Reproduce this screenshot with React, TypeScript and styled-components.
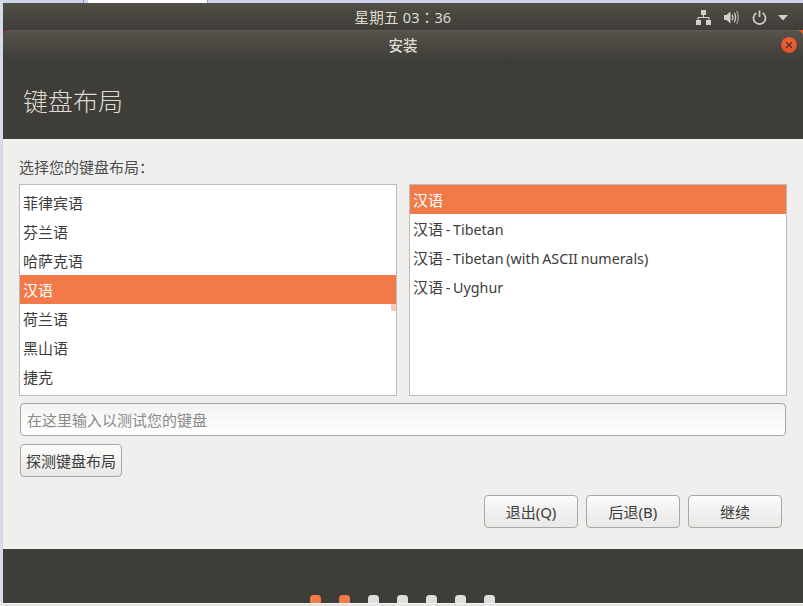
/* base */
import React from 'react';
import styled, { createGlobalStyle } from 'styled-components';

const Global = createGlobalStyle`
  html, body {
    margin: 0;
    padding: 0;
    background: #f0efed;
  }
  body {
    width: 803px;
    height: 606px;
    overflow: hidden;
    font-family: "Open Sans", "Noto Sans CJK SC", sans-serif;
  }
`;

const CJK = `"Noto Sans", "Noto Sans CJK SC", sans-serif`;

const Screen = styled.div`
  width: 803px;
  height: 606px;
  display: flex;
  flex-direction: column;
  overflow: hidden;
  background: #e4e4e2;
`;

const TabStrip = styled.div`
  height: 3px;
  flex: none;
  display: flex;
  background: #cdd5ea;
  border-left: 3px solid;
  border-image: linear-gradient(to right, #d5dbeb 34%, #7f88a3 34%) 1;
  box-sizing: border-box;
`;

const Tab = styled.div<{ $active?: boolean }>`
  margin-left: ${p => (p.$active ? '4px' : '0')};
  width: ${p => (p.$active ? '119px' : '80px')};
  background: ${p => (p.$active ? '#ffffff' : '#cdd5ea')};
  border-right: 1px solid #8f9ab8;
`;

const Desktop = styled.div`
  flex: 1;
  min-height: 0;
  display: flex;
  flex-direction: column;
  border-left: 3px solid;
  border-image: linear-gradient(to right, #d5dbeb 34%, #7f88a3 34%) 1;
  background: #3f3d38;
`;

const Panel = styled.header`
  height: 27px;
  flex: none;
  display: grid;
  grid-template-columns: 1fr auto 1fr;
  align-items: center;
  padding-right: 15px;
  background: linear-gradient(#514e47, #3f3d38);
  color: #dfdbd2;
`;

const Clock = styled.div`
  font: 14.5px/27px ${CJK};
  letter-spacing: 0.2px;
  white-space: pre;
  margin-left: 15px;
`;

const ClockColon = styled.span`
  font-family: "Noto Sans CJK TC", sans-serif;
`;

const Tray = styled.div`
  display: flex;
  justify-content: flex-end;
  align-items: center;
  gap: 13px;

  & > svg:last-child {
    margin-left: -2px;
    margin-top: 1px;
  }
`;

const Window = styled.main`
  flex: 1;
  min-height: 0;
  display: flex;
  flex-direction: column;
  position: relative;

  &::before,
  &::after {
    content: '';
    position: absolute;
    top: 0;
    width: 5px;
    height: 5px;
  }
  &::before {
    left: 0;
    background: #8b1d3c;
  }
  &::after {
    right: 0;
    background: #e9602f;
  }
`;

const TitleBar = styled.div`
  height: 30px;
  flex: none;
  position: relative;
  z-index: 1;
  display: flex;
  align-items: center;
  justify-content: center;
  border-radius: 6px 6px 0 0;
  border-top: 1px solid #5c5a50;
  box-sizing: border-box;
  background: linear-gradient(#56534b, #3f3d38);
  color: #dfdbd2;
  font: 500 14.5px/28px ${CJK};
  padding-bottom: 1px;
`;

const CloseButton = styled.div`
  position: absolute;
  right: 6px;
  top: 6px;
  width: 16px;
  height: 16px;
  border-radius: 50%;
  background: radial-gradient(circle at 50% 35%, #f2693c, #d8481e);
  box-shadow: 0 0 1px #2b2a26;
  display: flex;
  align-items: center;
  justify-content: center;
`;

const Header = styled.div`
  height: 79px;
  flex: none;
  position: relative;
  z-index: 1;
  display: flex;
  align-items: center;
  padding: 3px 0 0 20px;
  box-sizing: border-box;
  background: #3f3d38;
  color: #dfdbd2;
  font: 300 25px/34px ${CJK};
`;

const Content = styled.section`
  height: 410px;
  flex: none;
  box-sizing: border-box;
  padding: 18px 16px 0 16px;
  display: flex;
  flex-direction: column;
  background: #f0efed;
  color: #3c3c3c;
  font: 15px/20px ${CJK};
`;

const Prompt = styled.div`
  height: 20px;
  margin-bottom: 7px;
  color: #4c4c4c;
  font-size: 15px;
`;

const Lists = styled.div`
  display: grid;
  grid-template-columns: 378px 378px;
  column-gap: 12px;
`;

const ListBox = styled.div<{ $inset?: boolean }>`
  position: relative;
  height: 212px;
  box-sizing: border-box;
  border: 1px solid #bdbcb9;
  background: #ffffff;
  padding-top: ${p => (p.$inset ? '3px' : '0')};
  overflow: hidden;
`;

const Row = styled.div<{ $selected?: boolean }>`
  height: 29px;
  padding-left: 3px;
  line-height: 31px;
  white-space: pre;
  background: ${p => (p.$selected ? '#f27a48' : 'transparent')};
  color: ${p => (p.$selected ? '#ffffff' : '#3c3c3c')};
`;

const Latin = styled.span`
  font-size: 14.3px;
  word-spacing: -1px;
`;

const ScrollThumb = styled.div`
  position: absolute;
  right: 0;
  top: 119px;
  width: 5px;
  height: 7px;
  background: #f9c8b3;
`;

const TestInput = styled.div`
  margin: 7px 1px 0 1px;
  height: 33px;
  box-sizing: border-box;
  padding-left: 6px;
  border: 1px solid #a7a6a2;
  border-radius: 4px;
  background: linear-gradient(#f3f3f2, #ffffff);
  color: #8a8a88;
  line-height: 33px;
  font-size: 15px;
`;

const Button = styled.div<{ $width: number }>`
  width: ${p => p.$width}px;
  height: 33px;
  box-sizing: border-box;
  border: 1px solid #a9a8a4;
  border-radius: 4px;
  background: linear-gradient(#fbfbfa, #e9e8e6);
  display: flex;
  align-items: center;
  justify-content: center;
  color: #3c3c3c;
  font-size: 15px;
  white-space: pre;
`;

const DetectRow = styled.div`
  margin: 8px 0 0 1px;
  display: flex;
`;

const Actions = styled.div`
  margin: 18px 5px 0 0;
  display: flex;
  justify-content: flex-end;
  gap: 8px;
`;

const Footer = styled.footer`
  flex: 1;
  min-height: 0;
  display: flex;
  justify-content: center;
  align-items: flex-end;
  gap: 18px;
  background: #3f3d38;
  overflow: hidden;
  padding-right: 1px;
`;

const Dot = styled.div<{ $done?: boolean }>`
  width: 11px;
  height: 8px;
  border-radius: 3.5px 3.5px 0 0;
  background: ${p => (p.$done ? '#f27a48' : '#dededc')};
`;

const BottomEdge = styled.div`
  height: 3px;
  flex: none;
  background: #e4e4e2;
  border-top: 1px solid #f6f6f6;
  box-sizing: border-box;
`;

const NetworkIcon = () => (
  <svg width="15" height="15" viewBox="0 0 15 15" fill="#d2cfc9">
    <rect x="5" y="0" width="5" height="5" />
    <rect x="0" y="10" width="5" height="5" />
    <rect x="10" y="10" width="5" height="5" />
    <path d="M7 5h1v2h5.500v3h-1V8H2.500v2h-1V7H7z" />
  </svg>
);

const VolumeIcon = () => (
  <svg width="15" height="15" viewBox="0 0 15 15" fill="none">
    <path d="M0 5h2.500L6.500 1.500v12L2.500 10H0z" fill="#d2cfc9" />
    <path d="M8 4.800Q9.800 7.500 8 10.200" stroke="#d2cfc9" strokeWidth="1.400" />
    <path d="M10.300 2.800Q12.900 7.500 10.300 12.200" stroke="#d2cfc9" strokeWidth="1.300" />
    <path d="M12.600 1Q16 7.500 12.600 14" stroke="#a9a69f" strokeWidth="1.200" />
  </svg>
);

const PowerIcon = () => (
  <svg width="15" height="15" viewBox="0 0 15 15" fill="none" stroke="#d2cfc9" strokeWidth="1.700">
    <path d="M4.300 3a6 6 0 1 0 6.400 0" />
    <path d="M7.500 0.500v6.500" />
  </svg>
);

const CaretIcon = () => (
  <svg width="10" height="6" viewBox="0 0 10 6" fill="#d2cfc9">
    <path d="M0 0h10L5 5.500z" />
  </svg>
);

const leftRows = ['菲律宾语', '芬兰语', '哈萨克语', '汉语', '荷兰语', '黑山语', '捷克'];
const rightRows = ['', ' - Tibetan', ' - Tibetan (with ASCII numerals)', ' - Uyghur'];

const App: React.FunctionComponent = () => (
  <React.Fragment>
    <Global />
    <Screen>
      <TabStrip>
        <Tab />
        <Tab $active />
      </TabStrip>
      <Desktop>
        <Panel>
          <div />
          <Clock>
            星期五 03<ClockColon>：</ClockColon>36
          </Clock>
          <Tray>
            <NetworkIcon />
            <VolumeIcon />
            <PowerIcon />
            <CaretIcon />
          </Tray>
        </Panel>
        <Window>
          <TitleBar>
            安装
            <CloseButton>
              <svg width="8" height="8" viewBox="0 0 8 8" stroke="#4a2a1c" strokeWidth="1.300">
                <path d="M1 1l6 6M7 1l-6 6" />
              </svg>
            </CloseButton>
          </TitleBar>
          <Header>键盘布局</Header>
          <Content>
            <Prompt>选择您的键盘布局：</Prompt>
            <Lists>
              <ListBox $inset>
                {leftRows.map(label => (
                  <Row key={label} $selected={label === '汉语'}>
                    {label}
                  </Row>
                ))}
                <ScrollThumb />
              </ListBox>
              <ListBox>
                {rightRows.map(suffix => (
                  <Row key={suffix} $selected={suffix === ''}>
                    汉语<Latin>{suffix}</Latin>
                  </Row>
                ))}
              </ListBox>
            </Lists>
            <TestInput>在这里输入以测试您的键盘</TestInput>
            <DetectRow>
              <Button $width={102}>探测键盘布局</Button>
            </DetectRow>
            <Actions>
              <Button $width={94}>退出(Q)</Button>
              <Button $width={94}>后退(B)</Button>
              <Button $width={94}>继续</Button>
            </Actions>
          </Content>
          <Footer>
            {[true, true, false, false, false, false, false].map((done, i) => (
              <Dot key={i} $done={done} />
            ))}
          </Footer>
        </Window>
      </Desktop>
      <BottomEdge />
    </Screen>
  </React.Fragment>
);

export default App;
